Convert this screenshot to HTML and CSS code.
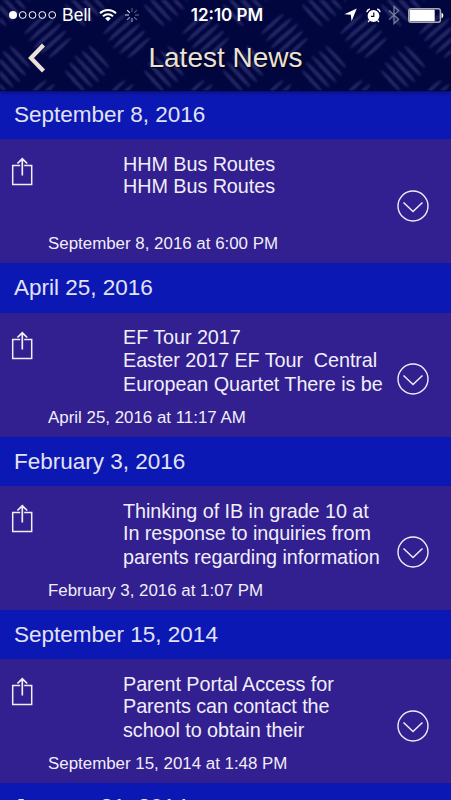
FILE: index.html
```html
<!DOCTYPE html>
<html lang="en">
<head>
  <meta charset="UTF-8" />
  <meta name="viewport" content="width=device-width, initial-scale=1.0">
  <title>Latest News</title>
  <link rel="stylesheet" href="styles.css">
</head>
<body>
  <svg class="defs" width="0" height="0">
    <symbol id="share" viewBox="0 0 22 29">
      <path d="M9.2 8.5H1.7v19h19v-19h-7.5" fill="none" stroke="currentColor" stroke-width="1.5" />
      <path d="M11.3 18.5V2M6.4 6.5l4.9-4.7 4.9 4.7" fill="none" stroke="currentColor" stroke-width="1.7" />
    </symbol>
    <symbol id="more" viewBox="0 0 32 32">
      <circle cx="16" cy="16" r="15" fill="none" stroke="currentColor" stroke-width="1.4" />
      <path d="M6.5 12.5l9.5 9 9.5-9" fill="none" stroke="currentColor" stroke-width="1.5" />
    </symbol>
  </svg>

  <header class="header">
    <svg class="plate" width="451" height="91">
      <defs>
        <g id="bars" fill="#252a66">
          <ellipse cx="-1" cy="-17" rx="15" ry="1.7" />
          <ellipse cx="0" cy="-8.5" rx="17" ry="1.9" />
          <ellipse cx="0" cy="0" rx="18" ry="1.9" />
          <ellipse cx="0" cy="8.5" rx="17" ry="1.9" />
          <ellipse cx="1" cy="17" rx="15" ry="1.7" />
        </g>
        <pattern id="tread" width="79" height="66" patternUnits="userSpaceOnUse" patternTransform="translate(8 3)">
          <use href="#bars" transform="translate(39.5 33) rotate(-42)" />
          <use href="#bars" transform="translate(0 0) rotate(47)" />
          <use href="#bars" transform="translate(79 0) rotate(47)" />
          <use href="#bars" transform="translate(0 66) rotate(47)" />
          <use href="#bars" transform="translate(79 66) rotate(47)" />
        </pattern>
        <filter id="soft"><feGaussianBlur stdDeviation="0.8" /></filter>
      </defs>
      <rect width="451" height="91" fill="#02063f" />
      <rect width="451" height="91" fill="url(#tread)" filter="url(#soft)" />
    </svg>

    <div class="status">
      <div class="status-left">
        <svg width="49" height="10" viewBox="0 0 49 10" fill="none" stroke="#fff" stroke-width="1">
          <circle cx="5" cy="5" r="4" fill="#fff" stroke="none" />
          <circle cx="14.7" cy="5" r="3.4" />
          <circle cx="24.5" cy="5" r="3.4" />
          <circle cx="34.3" cy="5" r="3.4" />
          <circle cx="44.2" cy="5" r="3.4" />
        </svg>
        <span class="carrier">Bell</span>
        <svg class="wifi" width="18" height="14" viewBox="0 0 18 14" fill="none" stroke="#fff" stroke-width="2">
          <path d="M1 5.2a11.4 11.4 0 0 1 16 0" />
          <path d="M4 8.2a7.2 7.2 0 0 1 10 0" />
          <path d="M9 13.2L6.2 10.4a4 4 0 0 1 5.6 0z" fill="#fff" stroke="none" />
        </svg>
        <svg class="spinner" width="14" height="14" viewBox="-7 -7 14 14" stroke="#fff" stroke-width="1.2">
          <path d="M0-3v-4" opacity=".3" />
          <path d="M2.1-2.1l2.8-2.8" opacity=".3" />
          <path d="M3 0h4" opacity=".35" />
          <path d="M2.1 2.1l2.8 2.8" opacity=".4" />
          <path d="M0 3v4" opacity=".5" />
          <path d="M-2.1 2.1l-2.8 2.8" opacity=".6" />
          <path d="M-3 0h-4" opacity=".75" />
          <path d="M-2.1-2.1l-2.8-2.8" opacity=".85" />
        </svg>
      </div>
      <div class="time">12:10 PM</div>
      <div class="status-right">
        <svg width="13" height="14" viewBox="0 0 13 14"><path d="M12.8.6L7.6 13.2 6.8 6.8.4 6.2z" fill="#fff" /></svg>
        <svg class="alarm" width="15" height="15" viewBox="0 0 15 15" fill="none" stroke="#fff">
          <circle cx="7.5" cy="8" r="5.9" fill="#fff" stroke="none" />
          <path d="M7.8 4.4v4H4.9" stroke="#050943" stroke-width="1.2" />
          <path d="M.8 4.2A4 4 0 0 1 3.8 1M14.2 4.2A4 4 0 0 0 11.2 1" stroke-width="1.3" />
          <path d="M3.4 12.4L2.2 14M11.6 12.4l1.2 1.6" stroke-width="1.3" />
        </svg>
        <svg class="bluetooth" width="12" height="20" viewBox="0 0 12 20"><path d="M1 5.4l9.6 8.8L6 18.6V1.4l4.6 4.2L1 14.6" fill="none" stroke="#777a9d" stroke-width="1.3" /></svg>
        <svg class="battery" width="36" height="15" viewBox="0 0 36 15">
          <rect x=".8" y=".8" width="31.6" height="13.4" rx="2.2" fill="none" stroke="#aaa9b3" stroke-width="1.5" />
          <rect x="1.7" y="1.7" width="25" height="11.6" rx=".8" fill="#fff" />
          <path d="M33.5 4.8c2.4.5 2.4 4.9 0 5.4z" fill="#fff" />
        </svg>
      </div>
    </div>

    <div class="navbar">
      <svg class="back" width="18" height="30" viewBox="0 0 18 30"><path d="M15.5 2L3 15l12.5 13" fill="none" stroke="#eae2da" stroke-width="4.2" /></svg>
      <h1>Latest News</h1>
    </div>
  </header>

  <main class="news">
    <h2>September 8, 2016</h2>
    <article class="item">
      <svg class="share"><use href="#share" /></svg>
      <div class="text">
        <h3>HHM Bus Routes</h3>
        <p>HHM Bus Routes</p>
      </div>
      <svg class="more"><use href="#more" /></svg>
      <time>September 8, 2016 at 6:00 PM</time>
    </article>

    <h2>April 25, 2016</h2>
    <article class="item">
      <svg class="share"><use href="#share" /></svg>
      <div class="text">
        <h3>EF Tour 2017</h3>
        <p>Easter 2017 EF Tour&nbsp; Central<br>European Quartet There is be</p>
      </div>
      <svg class="more"><use href="#more" /></svg>
      <time>April 25, 2016 at 11:17 AM</time>
    </article>

    <h2>February 3, 2016</h2>
    <article class="item">
      <svg class="share"><use href="#share" /></svg>
      <div class="text">
        <h3>Thinking of IB in grade 10 at</h3>
        <p>In response to inquiries from<br>parents regarding information</p>
      </div>
      <svg class="more"><use href="#more" /></svg>
      <time>February 3, 2016 at 1:07 PM</time>
    </article>

    <h2>September 15, 2014</h2>
    <article class="item">
      <svg class="share"><use href="#share" /></svg>
      <div class="text">
        <h3>Parent Portal Access for</h3>
        <p>Parents can contact the<br>school to obtain their</p>
      </div>
      <svg class="more"><use href="#more" /></svg>
      <time>September 15, 2014 at 1:48 PM</time>
    </article>

    <h2 class="next">January 31, 2014</h2>
  </main>
</body>
</html>
```
FILE: styles.css
```css
body {
  margin: 0;
  height: 800px;
  overflow: hidden;
  background: #0c18b4;
  color: #f1eef8;
  font-family: "Liberation Sans", Arial, sans-serif;
}

h1, h2, h3, p {
  margin: 0;
  font-weight: normal;
}

svg {
  display: block;
  flex: none;
}

.defs {
  position: absolute;
}

.header {
  position: relative;
  height: 90px;
  box-shadow: 0 1px 5px rgba(0, 0, 40, 0.8);
}

/* diamond plate texture behind the bars */
.plate {
  position: absolute;
  top: 0;
  left: 0;
  z-index: -1;
}

.status {
  display: grid;
  grid-template-columns: 1fr auto 1fr;
  align-items: center;
  height: 29px;
  padding: 0 7px 0 8px;
  color: #fff;
}

.status-left,
.status-right {
  display: flex;
  align-items: center;
}

.status-right {
  justify-content: flex-end;
}

.carrier {
  margin-left: 5px;
  font-size: 17.5px;
  line-height: 30px;
}

.wifi {
  margin-left: 8px;
}

.spinner {
  margin-left: 8px;
}

.time {
  padding-left: 2px;
  font-family: Inter, "Liberation Sans", sans-serif;
  font-size: 17px;
  font-weight: 600;
  line-height: 30px;
}

.alarm {
  margin-left: 9px;
}

.bluetooth {
  margin-left: 7px;
}

.battery {
  margin-left: 8px;
}

.navbar {
  display: grid;
  grid-template-columns: 60px 1fr 60px;
  align-items: center;
  height: 58px;
}

.back {
  margin-left: 28px;
}

.navbar h1 {
  color: #eae2da;
  font-size: 28px;
  line-height: 58px;
  text-align: center;
  text-shadow: 1px 1px 1px #000;
}

.news h2 {
  height: 49.33px;
  padding-left: 14px;
  box-sizing: border-box;
  color: #e2e2f2;
  font-size: 22.5px;
  line-height: 50px;
}

.news .next {
  height: 17px;
  line-height: 48.5px;
}

.item {
  display: grid;
  grid-template-columns: 123px 1fr 55px;
  grid-template-rows: 92px 32px;
  height: 124px;
  background: #321f90;
}

.share {
  width: 22px;
  height: 29px;
  margin: 18px 0 0 11px;
}

.text {
  padding-top: 14.7px;
  font-size: 19.8px;
  letter-spacing: -0.06px;
  white-space: nowrap;
}

.text h3 {
  font-size: 19.8px;
  line-height: 20.5px;
}

.text p {
  margin-top: -0.2px;
  line-height: 24px;
}

.more {
  width: 32px;
  height: 32px;
  margin: 50.4px 0 0 1px;
}

.item time {
  grid-column: 1 / -1;
  padding-left: 48px;
  font-size: 16.9px;
  line-height: 25px;
}
```
